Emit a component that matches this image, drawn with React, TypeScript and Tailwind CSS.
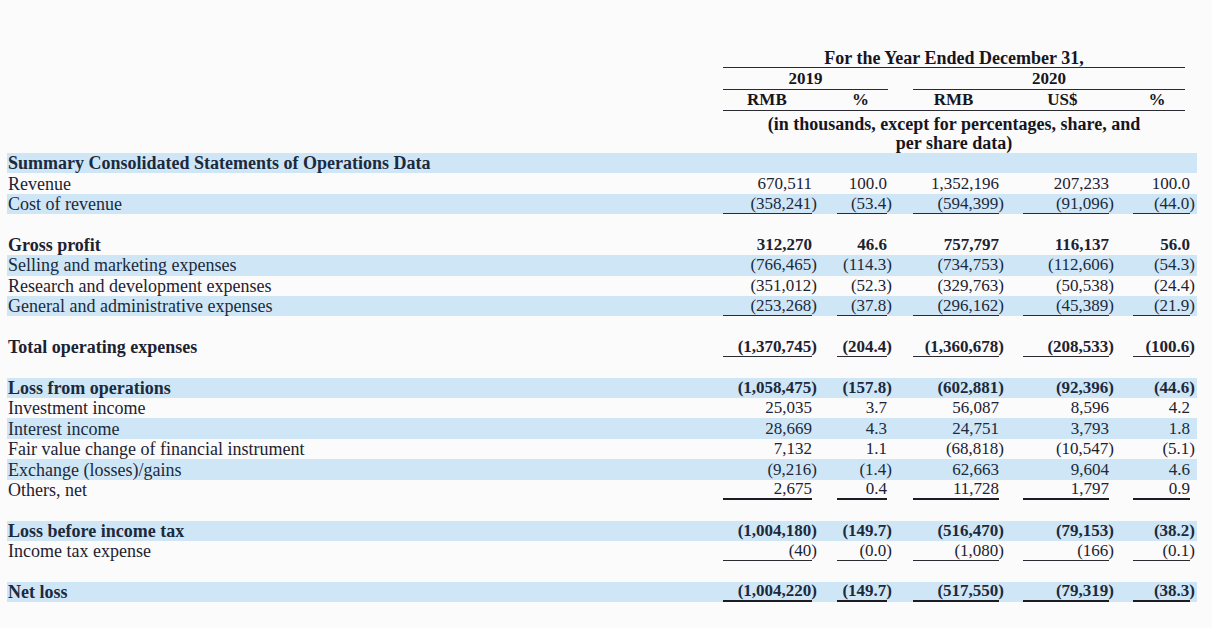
import React from 'react';

type Row = {
  label?: string;
  values?: string[];
  band?: boolean;
  bold?: boolean;
  labelBold?: boolean;
  line?: 'single' | 'thick';
};

const rows: Row[] = [
  { label: 'Summary Consolidated Statements of Operations Data', band: true, labelBold: true },
  { label: 'Revenue', values: ['670,511', '100.0', '1,352,196', '207,233', '100.0'] },
  { label: 'Cost of revenue', values: ['(358,241)', '(53.4)', '(594,399)', '(91,096)', '(44.0)'], band: true, line: 'single' },
  {},
  { label: 'Gross profit', values: ['312,270', '46.6', '757,797', '116,137', '56.0'], bold: true },
  { label: 'Selling and marketing expenses', values: ['(766,465)', '(114.3)', '(734,753)', '(112,606)', '(54.3)'], band: true },
  { label: 'Research and development expenses', values: ['(351,012)', '(52.3)', '(329,763)', '(50,538)', '(24.4)'] },
  { label: 'General and administrative expenses', values: ['(253,268)', '(37.8)', '(296,162)', '(45,389)', '(21.9)'], band: true, line: 'single' },
  {},
  { label: 'Total operating expenses', values: ['(1,370,745)', '(204.4)', '(1,360,678)', '(208,533)', '(100.6)'], bold: true, line: 'single' },
  {},
  { label: 'Loss from operations', values: ['(1,058,475)', '(157.8)', '(602,881)', '(92,396)', '(44.6)'], band: true, bold: true },
  { label: 'Investment income', values: ['25,035', '3.7', '56,087', '8,596', '4.2'] },
  { label: 'Interest income', values: ['28,669', '4.3', '24,751', '3,793', '1.8'], band: true },
  { label: 'Fair value change of financial instrument', values: ['7,132', '1.1', '(68,818)', '(10,547)', '(5.1)'] },
  { label: 'Exchange (losses)/gains', values: ['(9,216)', '(1.4)', '62,663', '9,604', '4.6'], band: true },
  { label: 'Others, net', values: ['2,675', '0.4', '11,728', '1,797', '0.9'], line: 'thick' },
  {},
  { label: 'Loss before income tax', values: ['(1,004,180)', '(149.7)', '(516,470)', '(79,153)', '(38.2)'], band: true, bold: true },
  { label: 'Income tax expense', values: ['(40)', '(0.0)', '(1,080)', '(166)', '(0.1)'], line: 'single' },
  {},
  { label: 'Net loss', values: ['(1,004,220)', '(149.7)', '(517,550)', '(79,319)', '(38.3)'], band: true, bold: true, line: 'thick' },
];

// column widths + gaps, measured off the scan
const cols = [
  'w-[89px]',
  'ml-[25px] w-[50px]',
  'ml-[26px] w-[86px]',
  'ml-[24px] w-[86px]',
  'ml-[24px] w-[57px]',
];

const Cell: React.FC<{ value: string; col: number; line?: Row['line'] }> = ({ value, col, line }) => {
  const neg = value.startsWith('(');
  const border =
    line === 'thick' ? 'border-b-2 border-[#1c1c22]' : line === 'single' ? 'border-b border-[#2a2a30]' : '';
  return (
    <div className={`${cols[col]} h-full flex items-center justify-end ${border}`}>
      <span className={neg ? '-mr-[5px]' : ''}>{value}</span>
    </div>
  );
};

const App: React.FC = () => {
  const headCols = ['RMB', '%', 'RMB', 'US$', '%'];

  return (
    <div className="w-[1212px] h-[628px] overflow-hidden bg-[#fbfbfc] pt-[48px] pl-[7px] text-[17px] leading-[20px] text-[#1d2230] font-['Liberation_Serif','Times_New_Roman',serif]">
      {/* header block */}
      <div className="ml-[716px] w-[462px] font-bold text-[#16161c] text-[18px]">
        <div className="h-[20px] border-b border-[#2a2a30] text-center whitespace-nowrap">For the Year Ended December 31,</div>
        <div className="h-[22px] flex items-center text-[17px]">
          <div className="w-[165px] h-full flex items-center justify-center border-b border-[#2a2a30]">2019</div>
          <div className="ml-[25px] w-[272px] h-full flex items-center justify-center border-b border-[#2a2a30]">2020</div>
        </div>
        <div className="h-[21px] flex items-center border-b border-[#2a2a30] text-[17px]">
          {headCols.map((h, i) => (
            <div key={i} className={`${cols[i]} text-center`}>
              {h}
            </div>
          ))}
        </div>
        <div className="mt-[3px] h-[19px] text-center whitespace-nowrap -mx-[10px]">
          (in thousands, except for percentages, share, and
        </div>
        <div className="h-[20px] text-center">per share data)</div>
      </div>

      {/* table body */}
      <div className="w-[1190px]">
        {rows.map((row, i) => (
          <div
            key={i}
            className={`flex h-[20.43px] items-center ${row.band ? 'bg-[#cfe6f6] text-[#1b2a3d]' : ''} ${row.bold ? 'font-bold' : ''}`}
          >
            <div className={`w-[716px] pl-[1px] whitespace-nowrap text-[18px] ${row.labelBold ? 'font-bold' : ''}`}>
              {row.label}
            </div>
            {row.values?.map((v, c) => (
              <Cell key={c} value={v} col={c} line={row.line} />
            ))}
          </div>
        ))}
      </div>
    </div>
  );
};

export default App;
